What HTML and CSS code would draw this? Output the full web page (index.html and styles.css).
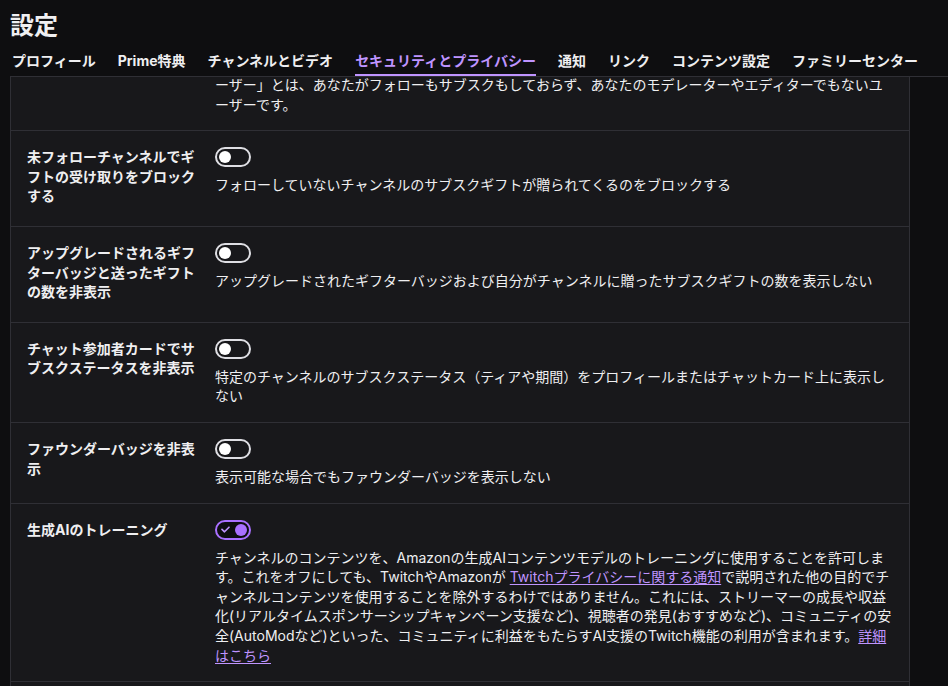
FILE: index.html
```html
<!DOCTYPE html>
<html lang="ja">
<head>
<meta charset="utf-8">
<title>設定</title>
<link rel="stylesheet" href="styles.css">
</head>
<body>
<div class="page">
  <header class="header">
    <h1 class="title">設定</h1>
    <nav class="tabs">
      <a class="tab" href="#">プロフィール</a>
      <a class="tab" href="#">Prime特典</a>
      <a class="tab" href="#">チャンネルとビデオ</a>
      <a class="tab active" href="#">セキュリティとプライバシー</a>
      <a class="tab" href="#">通知</a>
      <a class="tab" href="#">リンク</a>
      <a class="tab" href="#">コンテンツ設定</a>
      <a class="tab" href="#">ファミリーセンター</a>
    </nav>
  </header>
  <main class="scroller">
    <div class="panel">
      <div class="row row-partial">
        <div class="label"></div>
        <div class="control">
          <p class="desc">ーザー」とは、あなたがフォローもサブスクもしておらず、あなたのモデレーターやエディターでもないユ<br>ーザーです。</p>
        </div>
      </div>
      <div class="row">
        <div class="label">未フォローチャンネルでギフトの受け取りをブロックする</div>
        <div class="control">
          <div class="toggle"><span class="knob"></span></div>
          <p class="desc">フォローしていないチャンネルのサブスクギフトが贈られてくるのをブロックする</p>
        </div>
      </div>
      <div class="row">
        <div class="label">アップグレードされるギフターバッジと送ったギフトの数を非表示</div>
        <div class="control">
          <div class="toggle"><span class="knob"></span></div>
          <p class="desc">アップグレードされたギフターバッジおよび自分がチャンネルに贈ったサブスクギフトの数を表示しない</p>
        </div>
      </div>
      <div class="row">
        <div class="label">チャット参加者カードでサブスクステータスを非表示</div>
        <div class="control">
          <div class="toggle"><span class="knob"></span></div>
          <p class="desc">特定のチャンネルのサブスクステータス（ティアや期間）をプロフィールまたはチャットカード上に表示しない</p>
        </div>
      </div>
      <div class="row">
        <div class="label">ファウンダーバッジを非表示</div>
        <div class="control">
          <div class="toggle"><span class="knob"></span></div>
          <p class="desc">表示可能な場合でもファウンダーバッジを表示しない</p>
        </div>
      </div>
      <div class="row">
        <div class="label">生成AIのトレーニング</div>
        <div class="control">
          <div class="toggle on">
            <svg class="check" width="9" height="7" viewBox="0 0 9 7"><path d="M1 3.4 L3.5 5.8 L8 1.2" fill="none" stroke="#bf94ff" stroke-width="1.6" stroke-linecap="round" stroke-linejoin="round"/></svg>
            <span class="knob"></span>
          </div>
          <p class="desc">チャンネルのコンテンツを、Amazonの生成AIコンテンツモデルのトレーニングに使用することを許可します。これをオフにしても、TwitchやAmazonが <a class="link" href="#">Twitchプライバシーに関する通知</a>で説明された他の目的でチャンネルコンテンツを使用することを除外するわけではありません。これには、ストリーマーの成長や収益化(リアルタイムスポンサーシップキャンペーン支援など)、視聴者の発見(おすすめなど)、コミュニティの安全(AutoModなど)といった、コミュニティに利益をもたらすAI支援のTwitch機能の利用が含まれます。<a class="link" href="#">詳細はこちら</a></p>
        </div>
      </div>
      <div class="row">
        <div class="label">&nbsp;</div>
        <div class="control"></div>
      </div>
    </div>
  </main>
</div>
</body>
</html>
```
FILE: styles.css
```css
html, body {
  margin: 0;
  height: 100%;
  background: #0e0e10;
}

body {
  font-family: Inter, "Noto Sans CJK JP", sans-serif;
  font-size: 14px;
  line-height: 1.4;
  color: #efeff1;
  overflow: hidden;
  line-break: normal;
}

.page {
  height: 100vh;
  display: flex;
  flex-direction: column;
}

.header {
  padding: 11px 0 0 10px;
  flex: none;
}

.title {
  margin: 0;
  font-size: 24px;
  line-height: 30px;
  font-weight: 700;
}

.tabs {
  display: flex;
  gap: 22px;
  margin-top: 10px;
  padding-left: 2px;
  border-bottom: 1px solid #2f2f35;
}

.tab {
  font-weight: 700;
  line-height: 20px;
  padding-bottom: 3px;
  border-bottom: 2px solid transparent;
  color: #efeff1;
  text-decoration: none;
  white-space: nowrap;
}

.tab.active {
  color: #bf94ff;
  border-bottom-color: #bf94ff;
}

.scroller {
  flex: 1;
  overflow: hidden;
}

.panel {
  width: 900px;
  box-sizing: border-box;
  margin: -2px 0 0 10px;
  background: #18181b;
  border-left: 1px solid #2f2f35;
  border-right: 1px solid #2f2f35;
}

.row {
  display: flex;
  gap: 16px;
  padding: 16px;
  border-bottom: 1px solid #2f2f35;
}

.row-partial {
  padding-top: 0;
}

.label {
  width: 172px;
  flex: none;
  font-weight: 700;
  padding-bottom: 4px;
}

.control {
  flex: 1;
  min-width: 0;
}

.desc {
  margin: 0;
}

.toggle {
  width: 36px;
  height: 20px;
  box-sizing: border-box;
  border: 2px solid #dedee3;
  border-radius: 10px;
  display: flex;
  align-items: center;
  justify-content: flex-start;
  padding: 0 2px;
  margin-bottom: 8px;
}

.knob {
  width: 12px;
  height: 12px;
  border-radius: 50%;
  background: #ffffff;
  flex: none;
}

.toggle.on {
  border-color: #a970ff;
  background: #0e0e10;
  justify-content: space-between;
  padding: 0 2px 0 4px;
}

.toggle.on .knob {
  background: #a970ff;
}

.check {
  display: block;
  flex: none;
}

.link {
  color: #bf94ff;
  text-decoration: underline;
  text-underline-offset: 2px;
}
```
